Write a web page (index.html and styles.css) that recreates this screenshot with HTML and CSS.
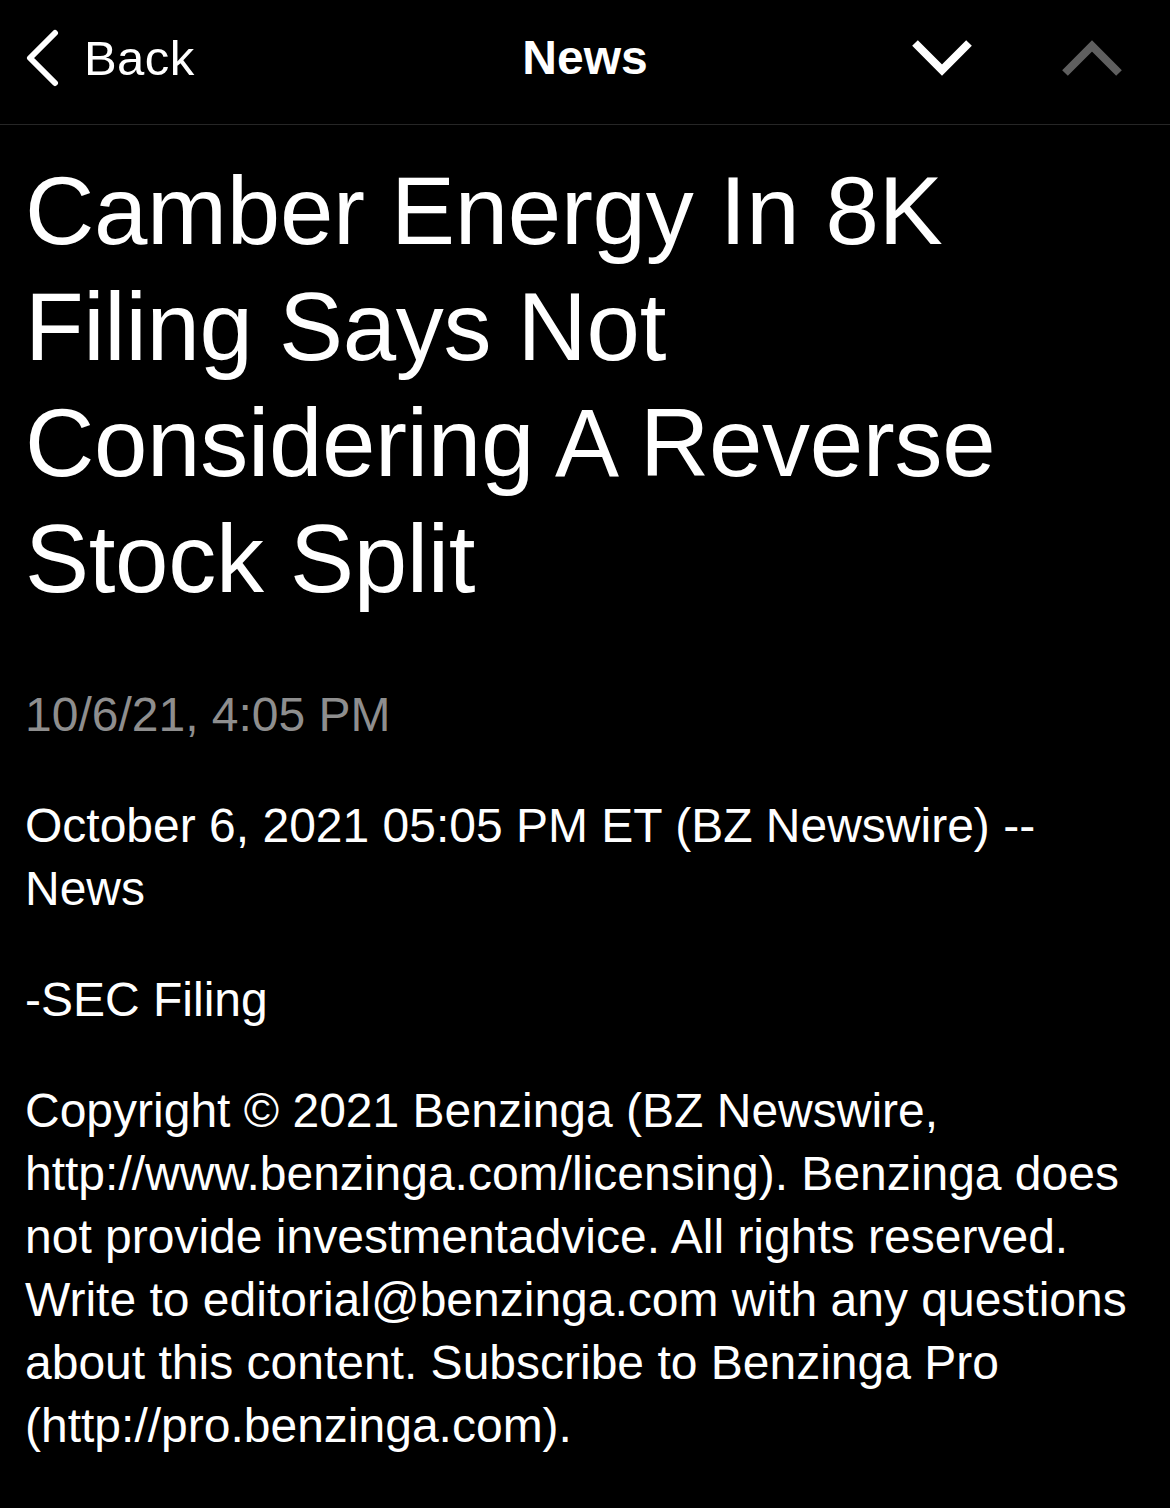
FILE: index.html
```html
<!DOCTYPE html>
<html lang="en">
<head>
<meta charset="utf-8">
<title>News</title>
<link rel="stylesheet" href="styles.css">
</head>
<body>
<header class="navbar">
  <div class="nav-left">
    <svg class="back-icon" width="36" height="58" viewBox="0 0 36 58"><path d="M31 4 L6 29 L31 54" fill="none" stroke="#fff" stroke-width="6" stroke-linecap="round" stroke-linejoin="round"/></svg>
    <span class="back-label">Back</span>
  </div>
  <div class="nav-title">News</div>
  <div class="nav-right">
    <svg class="chev" width="60" height="38" viewBox="0 0 60 38"><path d="M3 4 L30 31 L57 4" fill="none" stroke="#fff" stroke-width="8"/></svg>
    <svg class="chev" width="60" height="38" viewBox="0 0 60 38"><path d="M3 34 L30 7 L57 34" fill="none" stroke="#5f5f5f" stroke-width="8"/></svg>
  </div>
</header>
<main class="article">
  <h1 class="headline">Camber Energy In 8K Filing Says Not Considering A Reverse Stock Split</h1>
  <p class="meta">10/6/21, 4:05 PM</p>
  <p class="para">October 6, 2021 05:05 PM ET (BZ Newswire) --<br>News</p>
  <p class="para">-SEC Filing</p>
  <p class="para">Copyright © 2021 Benzinga (BZ Newswire, http://www.benzinga.com/licensing). Benzinga does not provide investmentadvice. All rights reserved. Write to editorial@benzinga.com with any questions about this content. Subscribe to Benzinga Pro (http://pro.benzinga.com).</p>
</main>
</body>
</html>
```

FILE: styles.css
```css
html, body {
  margin: 0;
  padding: 0;
  background: #000;
  color: #fff;
  font-family: "Liberation Sans", Arial, sans-serif;
}

.navbar {
  height: 124px;
  border-bottom: 1px solid #262626;
  display: grid;
  grid-template-columns: 1fr auto 1fr;
  align-items: center;
  padding: 0 24px;
}

.nav-left {
  display: flex;
  align-items: center;
  gap: 24px;
  margin-top: -8px;
}

.back-icon {
  display: block;
}

.back-label {
  font-size: 49px;
  line-height: 1;
  letter-spacing: 0.4px;
}

.nav-title {
  font-size: 48px;
  font-weight: 700;
  line-height: 1;
  margin-top: -8px;
}

.nav-right {
  display: flex;
  justify-content: flex-end;
  align-items: center;
  gap: 90px;
  margin-top: -8px;
  padding-right: 24px;
}

.chev {
  display: block;
}

.article {
  padding: 28px 25px 40px 25px;
}

.headline {
  margin: 0 0 66px 0;
  font-size: 96px;
  line-height: 116px;
  font-weight: 400;
  letter-spacing: -0.3px;
}

.meta {
  margin: 0 0 48px 0;
  font-size: 48px;
  line-height: 63px;
  color: #8e8e8e;
}

.para {
  margin: 0 0 48px 0;
  font-size: 48px;
  line-height: 63px;
}
```
